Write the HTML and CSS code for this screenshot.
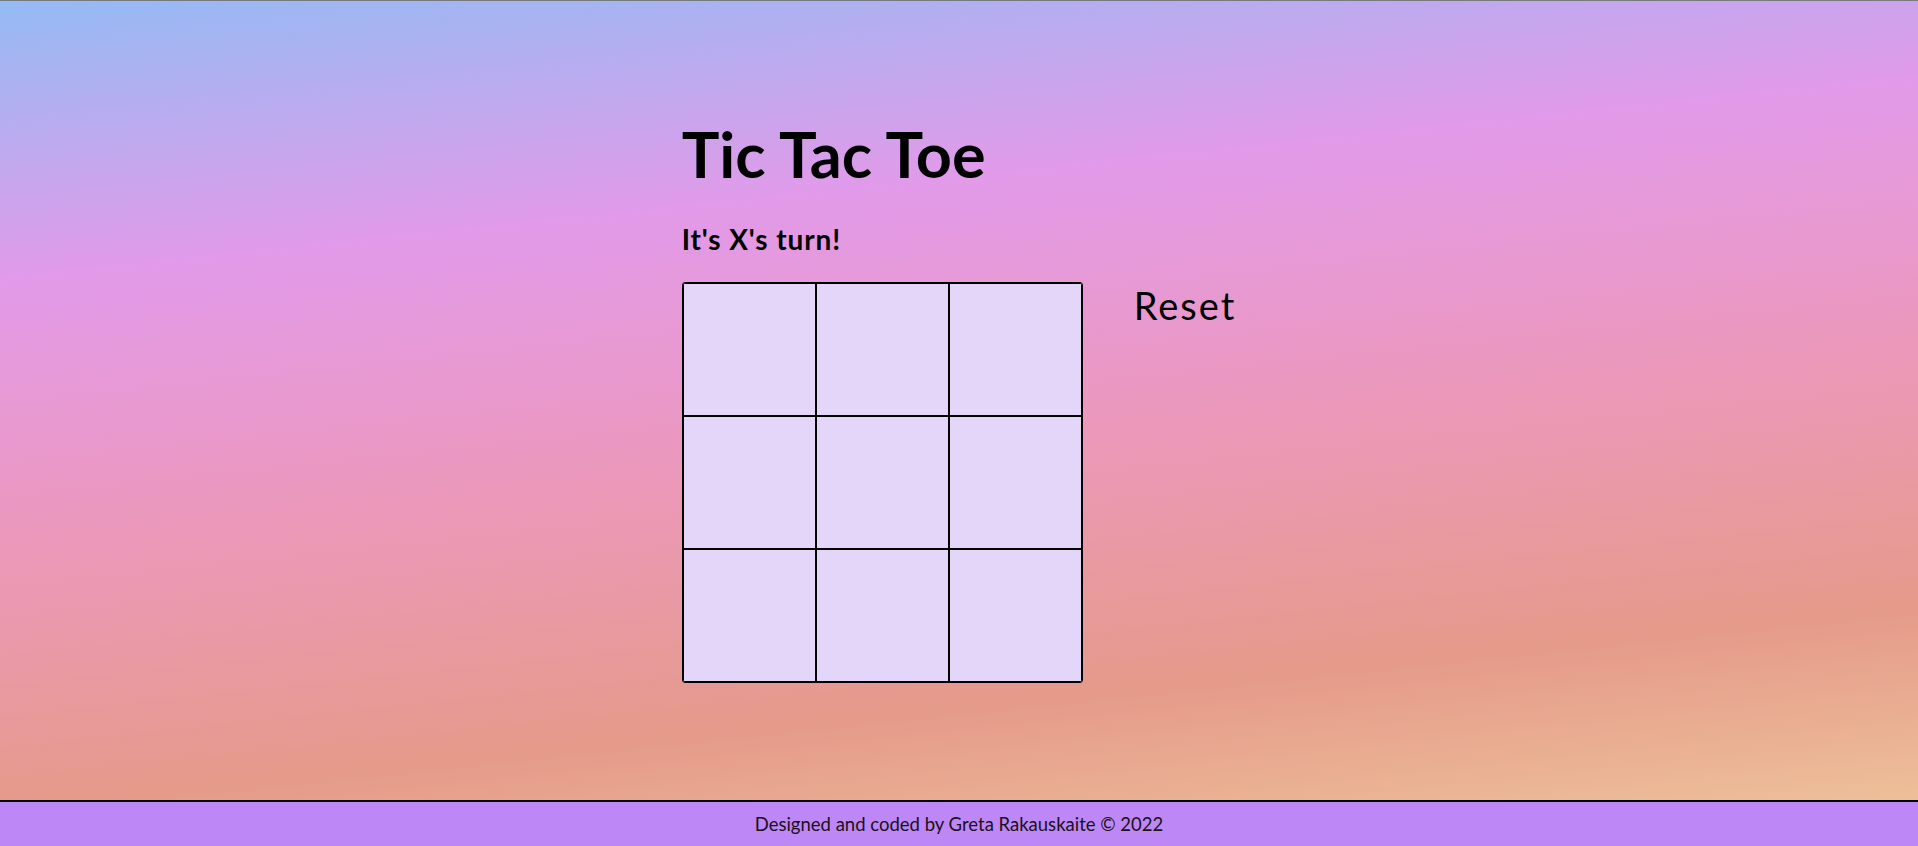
FILE: index.html
```html
<!DOCTYPE html>
<html lang="en">
<head>
<meta charset="utf-8">
<title>Tic Tac Toe</title>
<link rel="stylesheet" href="styles.css">
</head>
<body>
<main class="page">
  <div class="game">
    <h1 class="title">Tic Tac Toe</h1>
    <h2 class="status">It's X's turn!</h2>
    <div class="play">
      <div class="board">
        <div class="cell"></div><div class="cell"></div><div class="cell"></div>
        <div class="cell"></div><div class="cell"></div><div class="cell"></div>
        <div class="cell"></div><div class="cell"></div><div class="cell"></div>
      </div>
      <button class="reset" type="button">Reset</button>
    </div>
  </div>
</main>
<footer class="footer">Designed and coded by Greta Rakauskaite © 2022</footer>
</body>
</html>
```

FILE: styles.css
```css
html, body {
  margin: 0;
  padding: 0;
}

body {
  min-height: 100vh;
  box-sizing: border-box;
  border-top: 1px solid #777a80;
  display: flex;
  flex-direction: column;
  font-family: Lato, "Noto Sans", sans-serif;
  color: #000;
  background: linear-gradient(174deg, #94bbf4 0%, #e29ae9 27%, #ec98bb 52%, #e59a8a 77%, #efc89c 100%);
  background-attachment: fixed;
}

.page {
  flex: 1;
  padding-top: 121px;
}

.game {
  width: fit-content;
  margin: 0 auto;
  display: flex;
  flex-direction: column;
  align-items: flex-start;
}

.title {
  margin: 0;
  font-size: 63px;
  line-height: 1;
  font-weight: 700;
}

.status {
  margin: 40px 0 0;
  font-size: 28px;
  line-height: 1;
  font-weight: 700;
  letter-spacing: 0.9px;
}

.play {
  margin-top: 29px;
  display: flex;
  align-items: flex-start;
}

.board {
  display: grid;
  grid-template-columns: repeat(3, 133px);
  grid-template-rows: repeat(3, 133px);
  border: 1px solid #000;
  border-radius: 3px;
  overflow: hidden;
}

.cell {
  box-sizing: border-box;
  border: 1px solid #000;
  background: #e4d6f9;
}

.reset {
  margin: 4px 0 0 51px;
  padding: 0;
  border: none;
  background: none;
  font-family: Lato, "Noto Sans", sans-serif;
  font-size: 38px;
  line-height: 1;
  font-weight: 400;
  letter-spacing: 2px;
  color: #000;
  cursor: pointer;
}

.footer {
  border-top: 2px solid #000;
  background: #bd88f5;
  height: 44px;
  display: flex;
  justify-content: center;
  align-items: center;
  font-size: 18.5px;
  line-height: 1;
  color: #1a1020;
}
```
